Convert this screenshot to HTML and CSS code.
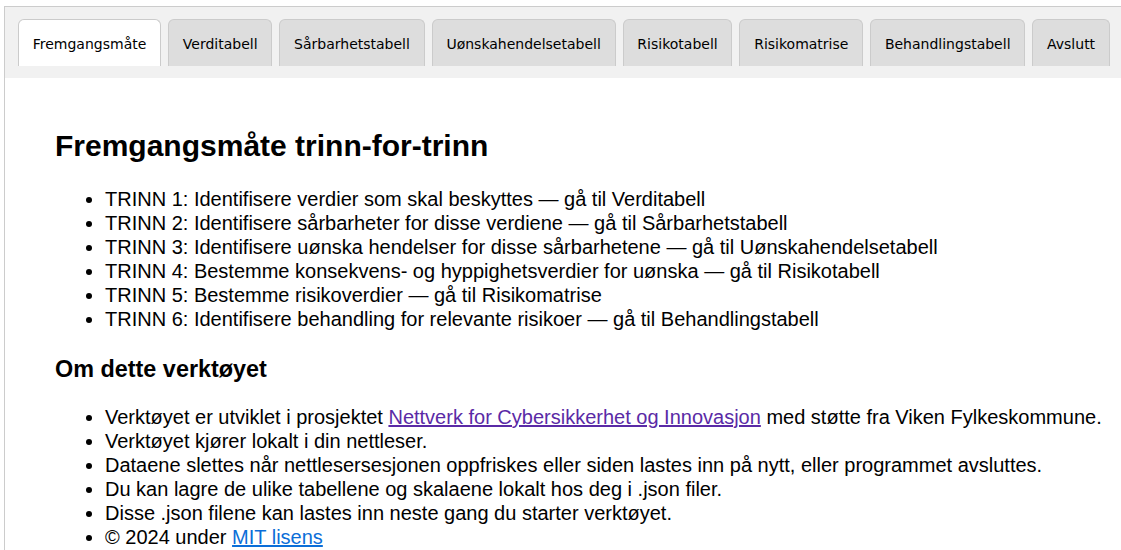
FILE: index.html
```html
<!DOCTYPE html>
<html lang="no">
<head>
<meta charset="utf-8">
<title>Risikovurdering</title>
<link rel="stylesheet" href="styles.css">
</head>
<body>
<div class="app">
  <nav class="tabbar">
    <button class="tab active">Fremgangsmåte</button>
    <button class="tab">Verditabell</button>
    <button class="tab">Sårbarhetstabell</button>
    <button class="tab">Uønskahendelsetabell</button>
    <button class="tab">Risikotabell</button>
    <button class="tab">Risikomatrise</button>
    <button class="tab">Behandlingstabell</button>
    <button class="tab">Avslutt</button>
  </nav>
  <main class="content">
    <h1 class="title">Fremgangsmåte trinn-for-trinn</h1>
    <ul class="list">
      <li>TRINN 1: Identifisere verdier som skal beskyttes — gå til Verditabell</li>
      <li>TRINN 2: Identifisere sårbarheter for disse verdiene — gå til Sårbarhetstabell</li>
      <li>TRINN 3: Identifisere uønska hendelser for disse sårbarhetene — gå til Uønskahendelsetabell</li>
      <li>TRINN 4: Bestemme konsekvens- og hyppighetsverdier for uønska — gå til Risikotabell</li>
      <li>TRINN 5: Bestemme risikoverdier — gå til Risikomatrise</li>
      <li>TRINN 6: Identifisere behandling for relevante risikoer — gå til Behandlingstabell</li>
    </ul>
    <h2 class="subtitle">Om dette verktøyet</h2>
    <ul class="list">
      <li>Verktøyet er utviklet i prosjektet <a class="link visited" href="#ncei">Nettverk for Cybersikkerhet og Innovasjon</a> med støtte fra Viken Fylkeskommune.</li>
      <li>Verktøyet kjører lokalt i din nettleser.</li>
      <li>Dataene slettes når nettlesersesjonen oppfriskes eller siden lastes inn på nytt, eller programmet avsluttes.</li>
      <li>Du kan lagre de ulike tabellene og skalaene lokalt hos deg i .json filer.</li>
      <li>Disse .json filene kan lastes inn neste gang du starter verktøyet.</li>
      <li>© 2024 under <a class="link" href="#mit">MIT lisens</a></li>
    </ul>
  </main>
</div>
</body>
</html>
```
FILE: styles.css
```css
html, body {
  margin: 0;
  padding: 0;
  background: #fff;
  overflow: hidden;
}
body {
  padding: 6px 0 0 4px;
  font-family: "Liberation Sans", Arial, sans-serif;
  color: #000;
}
.app {
  border: 1px solid #ccc;
  border-right: none;
  border-bottom: none;
  min-height: 560px;
}
.tabbar {
  display: flex;
  gap: 7px;
  background: #f1f1f1;
  padding: 12px 0 12px 13px;
}
.tab {
  font-family: "DejaVu Sans", Verdana, sans-serif;
  font-size: 14px;
  color: #000;
  background: #dddddd;
  border: 1px solid #cbcbcb;
  border-bottom: none;
  border-radius: 6px 6px 0 0;
  height: 47px;
  padding: 2px 13.75px 0;
  margin: 0;
  cursor: pointer;
  white-space: nowrap;
}
.tab.active {
  background: #fff;
}
.content {
  padding: 0 0 0 50px;
  font-size: 20px;
}
.title {
  font-size: 30px;
  font-weight: bold;
  margin: 50px 0 23px 0;
  line-height: 36px;
}
.list {
  margin: 0;
  padding-left: 50px;
  font-size: 20px;
  line-height: 24px;
}
.subtitle {
  font-size: 23.4px;
  font-weight: bold;
  margin: 24px 0 22px 0;
  line-height: 28px;
}
.link {
  color: #0b6ed8;
  text-decoration: underline;
}
.link.visited {
  color: #5a2aa6;
}
```
